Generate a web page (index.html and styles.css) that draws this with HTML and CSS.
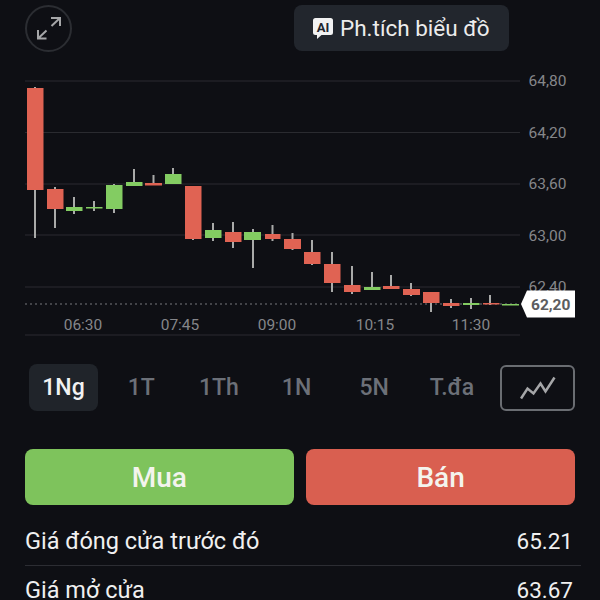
FILE: index.html
```html
<!DOCTYPE html>
<html lang="vi">
<head>
    <meta charset="UTF-8">
    <meta name="viewport" content="width=device-width, initial-scale=1.0">
    <title>Biểu đồ</title>
    <link rel="stylesheet" href="styles.css">
</head>
<body>
    <div class="top-bar">
        <button class="expand-btn" type="button">
            <svg width="28" height="28" viewBox="0 0 28 28">
                <path class="expand-icon" d="M16 4h9v8M25 4l-8.500 8M3 16v8.500h8.500M3 24.500l8.500-8"/>
            </svg>
        </button>
        <button class="analysis-btn" type="button">
            <svg class="ai-icon" width="20" height="21" viewBox="0 0 20 21">
                <path class="ai-bubble" d="M2.500 0h15A2.500 2.500 0 0 1 20 2.500v12a2.500 2.500 0 0 1-2.500 2.500H8.500L4 21v-4H2.500A2.500 2.500 0 0 1 0 14.500v-12A2.500 2.500 0 0 1 2.500 0z"/>
                <text class="ai-text" x="10" y="13.500">AI</text>
            </svg>
            Ph.tích biểu đồ
        </button>
    </div>

    <div class="chart">
        <svg width="600" height="284" viewBox="0 56 600 284">
            <g class="grid">
                <line x1="25" x2="520" y1="81" y2="81"/>
                <line x1="25" x2="520" y1="132.500" y2="132.500"/>
                <line x1="25" x2="520" y1="184" y2="184"/>
                <line x1="25" x2="520" y1="235" y2="235"/>
                <line x1="25" x2="520" y1="287" y2="287"/>
                <line x1="25" x2="520" y1="335" y2="335"/>
            </g>
            <line class="last-price" x1="25" x2="520" y1="304" y2="304"/>

            <g class="wicks">
                <line x1="35" x2="35" y1="87" y2="238"/>
                <line x1="55" x2="55" y1="187" y2="228"/>
                <line x1="74" x2="74" y1="197" y2="214"/>
                <line x1="94" x2="94" y1="201" y2="211"/>
                <line x1="114" x2="114" y1="184" y2="213"/>
                <line x1="134" x2="134" y1="169" y2="186"/>
                <line x1="153.500" x2="153.500" y1="175" y2="185"/>
                <line x1="173" x2="173" y1="168" y2="184"/>
                <line x1="193" x2="193" y1="186" y2="240"/>
                <line x1="213" x2="213" y1="223" y2="241"/>
                <line x1="233" x2="233" y1="222" y2="248"/>
                <line x1="253" x2="253" y1="229" y2="268"/>
                <line x1="272.500" x2="272.500" y1="225" y2="241"/>
                <line x1="292.500" x2="292.500" y1="233" y2="250"/>
                <line x1="312" x2="312" y1="240" y2="265"/>
                <line x1="332" x2="332" y1="252" y2="292"/>
                <line x1="352" x2="352" y1="266" y2="294"/>
                <line x1="372" x2="372" y1="272" y2="290"/>
                <line x1="391" x2="391" y1="275" y2="289"/>
                <line x1="411" x2="411" y1="283" y2="296"/>
                <line x1="431" x2="431" y1="292" y2="312"/>
                <line x1="451" x2="451" y1="299" y2="308"/>
                <line x1="471" x2="471" y1="298" y2="309"/>
                <line x1="490" x2="490" y1="295" y2="305"/>
            </g>

            <g class="down">
                <rect x="27" y="88" width="16.500" height="102"/>
                <rect x="47" y="189" width="16.500" height="20"/>
                <rect x="145" y="183" width="17" height="2.500"/>
                <rect x="185" y="186" width="16.500" height="53"/>
                <rect x="225" y="232" width="16.500" height="10"/>
                <rect x="265" y="234" width="15.500" height="5"/>
                <rect x="284" y="239" width="17" height="10"/>
                <rect x="304" y="252" width="16.500" height="12"/>
                <rect x="324" y="264" width="16.500" height="19"/>
                <rect x="344" y="285" width="16.500" height="7"/>
                <rect x="383" y="286" width="16.500" height="3"/>
                <rect x="403" y="289" width="17" height="6"/>
                <rect x="423" y="292" width="16.500" height="11"/>
                <rect x="443" y="303" width="16.500" height="3"/>
                <rect x="483" y="303" width="16.500" height="1.500"/>
            </g>
            <g class="up">
                <rect x="66" y="207" width="16.500" height="4"/>
                <rect x="86" y="207" width="16.500" height="1.500"/>
                <rect x="106" y="185" width="16.500" height="24"/>
                <rect x="126" y="182" width="16.500" height="4"/>
                <rect x="165" y="174" width="16.500" height="10"/>
                <rect x="205" y="230" width="16.500" height="8"/>
                <rect x="244" y="232" width="17" height="8"/>
                <rect x="364" y="287" width="16.500" height="3"/>
                <rect x="463" y="303" width="16.500" height="2"/>
                <rect x="502" y="304" width="17" height="1.500"/>
            </g>

            <g class="price-labels">
                <text x="528.500" y="85.500">64,80</text>
                <text x="528.500" y="137.500">64,20</text>
                <text x="528.500" y="188.500">63,60</text>
                <text x="528.500" y="240.500">63,00</text>
                <text x="528.500" y="291.500">62,40</text>
            </g>
            <g class="time-labels">
                <text x="83" y="329.500">06:30</text>
                <text x="180" y="329.500">07:45</text>
                <text x="277" y="329.500">09:00</text>
                <text x="375" y="329.500">10:15</text>
                <text x="471" y="329.500">11:30</text>
            </g>

            <path class="price-tag" d="M521 304l6-13.500h48v27h-48z"/>
            <text class="price-tag-text" x="531" y="309.500">62,20</text>
        </svg>
    </div>

    <div class="range-bar">
        <div class="range-tab active">1Ng</div>
        <div class="range-tab">1T</div>
        <div class="range-tab">1Th</div>
        <div class="range-tab">1N</div>
        <div class="range-tab">5N</div>
        <div class="range-tab">T.đa</div>
        <button class="chart-type-btn" type="button">
            <svg width="36" height="24" viewBox="0 0 36 24">
                <path class="line-icon" d="M1 22.500l6.500-10 6 5 7-10 5 8 9-14"/>
            </svg>
        </button>
    </div>

    <div class="actions">
        <button class="trade-btn buy" type="button">Mua</button>
        <button class="trade-btn sell" type="button">Bán</button>
    </div>

    <div class="stats">
        <div class="stat-row">
            <span class="stat-label">Giá đóng cửa trước đó</span>
            <span class="stat-value">65.21</span>
        </div>
        <div class="stat-row">
            <span class="stat-label">Giá mở cửa</span>
            <span class="stat-value">63.67</span>
        </div>
    </div>
</body>
</html>
```

FILE: styles.css
```css
* {
    margin: 0;
    padding: 0;
    box-sizing: border-box;
}

html, body {
    height: 600px;
    overflow: hidden;
}

body {
    font-family: Roboto, "Liberation Sans", sans-serif;
    background: #0e0f14;
    color: #f0f0f0;
}

button {
    font-family: inherit;
    border: none;
    cursor: pointer;
}

.top-bar {
    display: flex;
    justify-content: space-between;
    align-items: center;
    height: 56px;
    padding: 0 91px 0 25px;
}

.expand-btn {
    display: flex;
    align-items: center;
    justify-content: center;
    width: 47px;
    height: 47px;
    background: none;
    border: 2px solid #2b2d32;
    border-radius: 50%;
}

.expand-icon {
    fill: none;
    stroke: #a5a6a8;
    stroke-width: 2;
}

.analysis-btn {
    display: flex;
    align-items: center;
    gap: 7px;
    width: 215px;
    height: 46px;
    padding-left: 19px;
    background: #22262d;
    border-radius: 8px;
    color: #ececec;
    font-size: 22.500px;
}

.ai-bubble {
    fill: #f2f2f2;
}

.ai-text {
    fill: #22262d;
    font-size: 13px;
    font-weight: 700;
    text-anchor: middle;
}

.chart svg {
    display: block;
}

.grid line {
    stroke: #2a2b30;
    stroke-width: 1.200;
}

.last-price {
    stroke: #77787c;
    stroke-width: 1;
    stroke-dasharray: 2 3;
}

.wicks line {
    stroke: #a9aaa9;
    stroke-width: 2;
}

.down rect {
    fill: #e06353;
}

.up rect {
    fill: #83cc62;
}

.price-labels text,
.time-labels text {
    fill: #85868a;
    font-size: 15.500px;
}

.time-labels text {
    text-anchor: middle;
}

.price-tag {
    fill: #ffffff;
}

.price-tag-text {
    fill: #5c5d60;
    font-size: 15.500px;
    font-weight: 700;
}

.range-bar {
    display: flex;
    align-items: center;
    gap: 8.700px;
    height: 47px;
    margin-top: 24px;
    padding: 0 25px 0 29px;
}

.range-tab {
    width: 69px;
    height: 47px;
    line-height: 47px;
    text-align: center;
    color: #6c7078;
    font-size: 23px;
    font-weight: 500;
    border-radius: 8px;
}

.range-tab.active {
    background: #20242a;
    color: #f2f2f2;
}

.chart-type-btn {
    display: flex;
    align-items: center;
    justify-content: center;
    width: 75px;
    height: 46px;
    margin-left: auto;
    background: none;
    border: 2px solid #6a6d72;
    border-radius: 6px;
}

.line-icon {
    fill: none;
    stroke: #a5a6a8;
    stroke-width: 2.500;
}

.actions {
    display: flex;
    gap: 12.500px;
    margin-top: 38px;
    padding: 0 25px;
}

.trade-btn {
    flex: 1;
    height: 56px;
    border-radius: 8px;
    color: #f4f4ee;
    font-size: 28px;
    font-weight: 500;
}

.buy {
    background: #7ec35c;
}

.sell {
    background: #d95f50;
}

.stats {
    margin: 12px 19px 0 25px;
}

.stat-row {
    display: flex;
    justify-content: space-between;
    align-items: center;
    height: 49px;
    padding-right: 8px;
    border-bottom: 1.500px solid #2c2d33;
}

.stat-label {
    font-size: 23.500px;
}

.stat-value {
    font-size: 22.500px;
}
```
